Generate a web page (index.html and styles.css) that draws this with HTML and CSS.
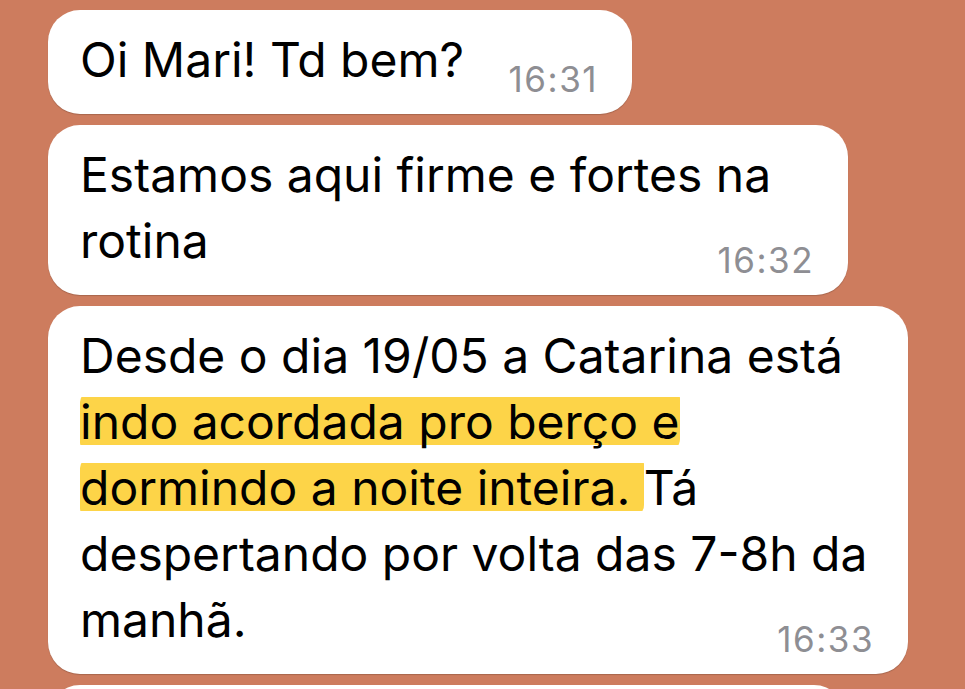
FILE: index.html
```html
<!doctype html>
<html>
<head>
	<title>Conversa</title>
	<meta charset="utf-8">
	<meta name="viewport" content="initial-scale=1, maximum-scale=1, minimum-scale=1, user-scalable=no">
	<link rel="stylesheet" href="styles.css">
</head>

<body>
	<div class="chat">
		<div class="bubble bubble-short">
			<p class="msg">Oi Mari! Td bem?<span class="time">16:31</span></p>
		</div>

		<div class="bubble bubble-medium">
			<p class="msg">Estamos aqui firme e fortes na<br>rotina<span class="time">16:32</span></p>
		</div>

		<div class="bubble bubble-long">
			<p class="msg">Desde o dia 19/05 a Catarina está<br><span class="mark">indo acordada pro berço e</span><br><span class="mark">dormindo a noite inteira. </span>Tá<br>despertando por volta das 7-8h da<br>manhã.<span class="time">16:33</span></p>
		</div>

		<div class="bubble bubble-next"></div>
	</div>
</body>
</html>
```

FILE: styles.css
```css
html, body, p {
	padding: 0;
	margin: 0;
}
body {
	background: #cd7c5e;
	font-family: Inter, "Liberation Sans", sans-serif;
	overflow: hidden;
}
.chat {
	display: flex;
	flex-direction: column;
	align-items: flex-start;
	gap: 11px;
	padding: 10px 0 0 48px;
}
.bubble {
	box-sizing: border-box;
	padding: 17px 34px 21px 32px;
	background: #fff;
	border-radius: 32px;
	box-shadow: 0 1px 1px rgba(0,0,0,.18);
}
.bubble-short {
	width: 584px;
}
.bubble-medium {
	width: 800px;
}
.bubble-long {
	width: 860px;
}
.bubble-next {
	width: 798px;
	height: 80px;
}
.msg {
	display: flow-root;
	font-size: 48px;
	line-height: 66px;
	color: #000;
	white-space: nowrap;
}
.msg .time {
	float: right;
	position: relative;
	top: 19px;
	font-size: 35px;
	letter-spacing: 1.5px;
	line-height: 66px;
	color: #8e8e93;
}
.mark {
	background: linear-gradient(to bottom, transparent 9%, #fdd448 9%, #fdd448 90%, transparent 90%);
	border-radius: 10px 6px 12px 8px;
	-webkit-box-decoration-break: clone;
	box-decoration-break: clone;
}
```
